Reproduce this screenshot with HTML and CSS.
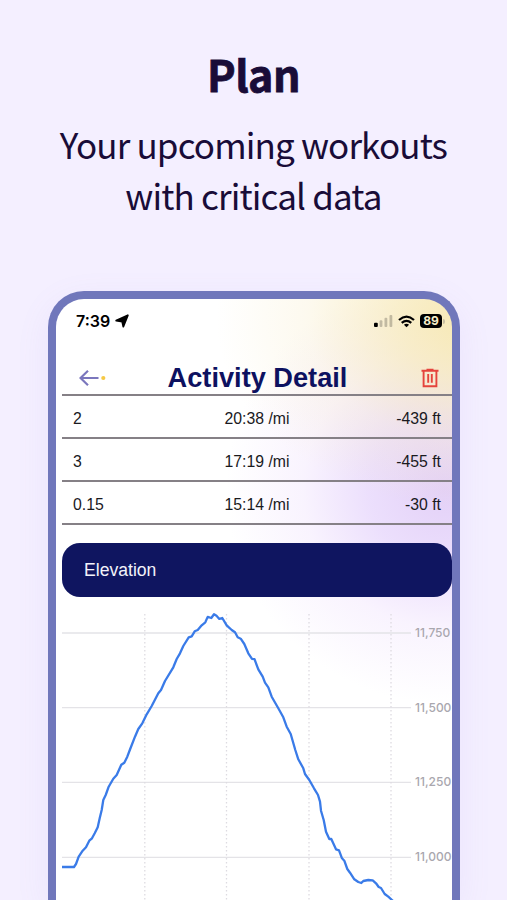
FILE: index.html
```
<!DOCTYPE html>
<html lang="en">
<head>
    <meta charset="UTF-8">
    <meta name="viewport" content="width=device-width, initial-scale=1.0">
    <title>Activity Detail</title>
    <link rel="stylesheet" href="styles.css">
</head>
<body>
    <div class="intro">
        <h1>Plan</h1>
        <p>Your upcoming workouts<br>with critical data</p>
    </div>

    <div class="phone">
        <div class="status">
            <span class="time">7:39</span>
            <svg class="location" width="14" height="14" viewBox="0 0 14 14"><path d="M12.800 1.300 8.300 12.600 7.200 7.500 1.200 6.600Z" fill="#000" stroke="#000" stroke-width="1.800" stroke-linejoin="round"/></svg>
            <svg class="signal" width="19" height="12" viewBox="0 0 19 12">
                <rect x="0" y="7.8" width="3.8" height="4.2" rx="1"/>
                <g opacity=".22">
                    <rect x="5.6" y="5.3" width="2.8" height="6.7" rx="1"/>
                    <rect x="10.5" y="2.8" width="2.8" height="9.2" rx="1"/>
                    <rect x="15.5" y="0" width="2.8" height="12" rx="1"/>
                </g>
            </svg>
            <svg class="wifi" width="17" height="13" viewBox="0 0 17 13" fill="none" stroke="#000">
                <path d="M1 5Q8.500-1.700 16 5" stroke-width="2.300"/>
                <path d="M3.700 7.900Q8.500 3.700 13.300 7.900" stroke-width="2.100"/>
                <path d="M5.900 9.700Q8.500 7.900 11.100 9.700L8.500 12.300Z" fill="#000" stroke="none"/>
            </svg>
            <span class="battery">89</span>
            <span class="battery-tip"></span>
        </div>

        <div class="header">
            <svg class="back" width="27" height="18" viewBox="0 0 27 18" fill="none">
                <path d="M19.500 9H1.500M9 1.800 1.500 9 9 16.200" stroke="#7b77bd" stroke-width="2.200"/>
                <circle cx="24.300" cy="9" r="2.100" fill="#f6c945"/>
            </svg>
            <h2>Activity Detail</h2>
            <svg class="trash" width="18" height="20" viewBox="0 0 18 20" fill="none" stroke="#e5443c" stroke-width="1.900">
                <path d="M.5 2.800H17.500M5.500 1.600H12.500M2.600 3V18.200H15.400V3M7.200 6V14.800M10.800 6V14.800"/>
            </svg>
        </div>

        <div class="splits">
            <div class="split"><span>2</span><span>20:38 /mi</span><span>-439 ft</span></div>
            <div class="split"><span>3</span><span>17:19 /mi</span><span>-455 ft</span></div>
            <div class="split"><span>0.15</span><span>15:14 /mi</span><span>-30 ft</span></div>
        </div>

        <div class="section-title">Elevation</div>

        <div class="chart">
            <svg width="350" height="296" viewBox="62 604 350 296" fill="none">
                <path class="grid" d="M62 633H411M62 707.700H411M62 782.300H411M62 857.300H411"/>
                <path class="grid dotted" d="M144.800 614V900M226.500 614V900M309 614V900M391 614V900"/>
                <polyline class="elevation" points="62,867 74,867 76,864 78.7,856.7 82.7,850.7 86,847.3 89.3,840.7 92,838.3 94.7,833.3 97.7,827.3 99.7,818.3 101.7,810 103.3,800 105.7,795 108.7,786.7 113.3,778.7 116.7,775 121.3,764.7 124.3,762.7 127.3,756.7 130,749.5 135,736.7 138.3,729 142.3,723.3 146.7,714.3 151.7,706 158.3,693.3 161,690 165,681 173.3,667.3 176.7,659 180,653.3 183.3,646 188.7,637.3 191.7,636.3 194.7,631.3 197.7,630 201.7,625.3 205.3,622.3 207.7,616.9 211.3,618 214,614.3 216.5,615.8 219.3,618.9 222.3,618 226.7,625.3 231.7,630 235,632.3 237.7,637.3 240.7,638.7 244.3,644 248.3,653.3 252,658.8 254.5,659.2 258.3,669.3 262.7,676.7 265,682.7 268.3,687.3 271.7,696.7 278.3,708.3 283.3,717.3 286.7,726.7 290.7,734 295.3,750 298.3,759.3 303.3,768.3 305,774 309.3,780 314,788.3 318,795 320,801.7 321,810.7 323.7,820 326,831.7 329.3,839 331.3,839 336,849.3 339,850.3 342,858.3 344.3,860.7 347.3,869 350,872.7 354.3,879.3 358.3,882 361.3,883 363.3,881 368.3,880 372.7,880.3 376,883.3 378.7,887 381,888 384.7,894 388.3,896.7 392,900 395,903"/>
            </svg>
            <div class="labels">
                <span>11,750</span>
                <span>11,500</span>
                <span>11,250</span>
                <span>11,000</span>
            </div>
        </div>
    </div>
</body>
</html>
```

FILE: styles.css
```
body {
    margin: 0;
    height: 900px;
    overflow: hidden;
    background-color: #f4efff;
    font-family: "Liberation Sans", Arial, sans-serif;
    color: #1a1a1e;
}

.intro {
    height: 291px;
    padding-top: 46px;
    box-sizing: border-box;
    text-align: center;
    font-family: "Noto Sans CJK SC", "Source Sans Pro", sans-serif;
    color: #190c38;
}
.intro h1 {
    margin: 0;
    font-size: 43px;
    line-height: 54px;
    font-weight: 700;
    letter-spacing: -.6px;
    -webkit-text-stroke: .8px #190c38;
}
.intro p {
    margin: 18px 0 0;
    font-size: 35px;
    line-height: 51px;
    letter-spacing: -.85px;
    white-space: nowrap;
}

.phone {
    width: 396px;
    height: 601px;
    margin-left: 48px;
    border: 8px solid #7077bb;
    border-bottom: 0;
    border-radius: 36px 36px 0 0;
    overflow: hidden;
    background:
        radial-gradient(ellipse 260px 190px at 420px 20px, #f7e8b2 0%, rgba(247, 233, 181, .7) 30%, rgba(247, 233, 190, .25) 65%, rgba(247, 233, 200, 0) 100%),
        radial-gradient(ellipse 220px 215px at 390px 190px, #e3d0f7 0%, rgba(231, 215, 252, .8) 35%, rgba(240, 226, 253, .4) 65%, rgba(244, 232, 253, 0) 100%),
        #fff;
    box-shadow: 0 10px 34px rgba(140, 120, 220, .09);
}

.status {
    display: flex;
    align-items: center;
    height: 44px;
    padding-left: 20px;
}
.time {
    width: 39px;
    font: 600 16px Inter, sans-serif;
    color: #000;
}
.signal {
    margin-left: 245px;
}
.wifi {
    margin-left: 5px;
}
.battery {
    width: 22px;
    height: 14px;
    margin-left: 5px;
    border-radius: 4px;
    background: #000;
    color: #f6ecc8;
    font: 700 12px/14px Inter, sans-serif;
    text-align: center;
}
.battery-tip {
    width: 2px;
    height: 5px;
    margin-left: 1px;
    border-radius: 0 2px 2px 0;
    background: #c9bfa0;
}

.header {
    display: flex;
    align-items: center;
    height: 51px;
    padding: 0 13px 0 23px;
}
.header h2 {
    flex: 1;
    margin: 19px 12px 0 0;
    text-align: center;
    font-size: 27.2px;
    line-height: 30px;
    color: #0d1160;
}
.back, .trash {
    margin-top: 18px;
}

.splits {
    margin-left: 6px;
    border-top: 2px solid #858086;
}
.split {
    display: grid;
    grid-template-columns: 1fr 1fr 1fr;
    height: 41px;
    padding: 0 11px;
    border-bottom: 2px solid #858086;
    font-size: 15.8px;
    line-height: 45px;
}
.split span:nth-child(2) {
    text-align: center;
}
.split span:nth-child(3) {
    text-align: right;
}

.section-title {
    height: 54px;
    margin: 18px 0 0 6px;
    padding-left: 22px;
    box-sizing: border-box;
    border-radius: 18px;
    background: #0f1560;
    color: #f3f3fa;
    font-size: 17.6px;
    line-height: 54px;
}

.chart {
    display: flex;
    height: 296px;
    margin: 7px 0 0 6px;
}
.chart svg {
    flex: none;
}
.grid {
    stroke: #e4e3e7;
    stroke-width: 1.3;
}
.dotted {
    stroke: #dddbe1;
    stroke-dasharray: 1.5 2.5;
}
.elevation {
    stroke: #3a7be8;
    stroke-width: 2.3;
    stroke-linejoin: round;
}
.labels {
    display: flex;
    flex-direction: column;
    margin: -8.300px 0 0 3px;
    font: 500 12px/74.800px Inter, sans-serif;
    color: #a9a7ae;
}
```
